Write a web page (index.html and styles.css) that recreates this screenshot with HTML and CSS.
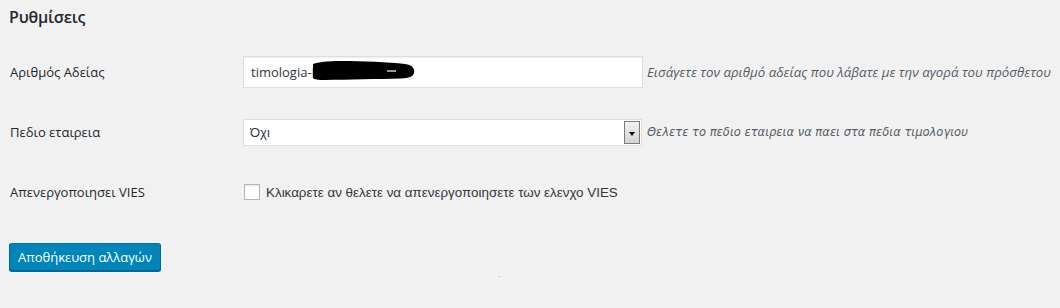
FILE: index.html
```html
<!DOCTYPE html>
<html lang="el">
<head>
    <meta charset="UTF-8">
    <meta name="viewport" content="width=device-width, initial-scale=1.0">
    <title>Ρυθμίσεις</title>
    <link rel="stylesheet" href="styles.css">
</head>
<body>
    <div id="wrap">
        <h2 class="title">Ρυθμίσεις</h2>
        <form class="settings">
            <div class="row">
                <label class="label" for="licence">Αριθμός Αδείας</label>
                <div class="field">
                    <div class="text-box">
                        <input id="licence" class="text-input" type="text" value="timologia-E">
                        <svg class="redact" width="102" height="20" viewBox="0 0 102 20">
                            <path d="M0 3 C6 1 14 0 28 0 C50 0 75 1 92 3 C100 4 102 8 101 12 C100 16 96 17 88 17.5 C65 18 35 18.5 12 19 C5 19 1 18.5 0 17 Z" fill="#000"/>
                            <path d="M74 10 L83 10" stroke="#fff" stroke-width="1.2"/>
                        </svg>
                    </div>
                    <span class="desc">Εισάγετε τον αριθμό αδείας που λάβατε με την αγορά του πρόσθετου</span>
                </div>
            </div>
            <div class="row">
                <label class="label" for="company">Πεδιο εταιρεια</label>
                <div class="field">
                    <div class="select-box">
                        <select id="company" class="select">
                            <option>Όχι</option>
                            <option>Ναι</option>
                        </select>
                        <span class="select-btn"></span>
                    </div>
                    <span class="desc desc-tahoma">Θελετε το πεδιο εταιρεια να παει στα πεδια τιμολογιου</span>
                </div>
            </div>
            <div class="row">
                <label class="label" for="vies">Απενεργοποιησει VIES</label>
                <div class="field">
                    <input id="vies" class="check" type="checkbox">
                    <label class="check-text" for="vies">Κλικαρετε αν θελετε να απενεργοποιησετε των ελενχο VIES</label>
                </div>
            </div>
            <button type="button" class="button-primary">Αποθήκευση αλλαγών</button>
        </form>
        <span class="dot"></span>
    </div>
</body>
</html>
```

FILE: styles.css
```css
*{
    margin: 0;
    padding: 0;
    box-sizing: border-box;
}
body{
    background: #f1f1f1;
    color: #23282d;
    font-family: "Open Sans", "Noto Sans", sans-serif;
    font-size: 13px;
    overflow: hidden;
}
#wrap{
    width: 1060px;
    height: 308px;
    padding: 0 9px;
    position: relative;
}
.title{
    font-size: 16px;
    font-weight: 600;
    line-height: 20px;
    letter-spacing: -0.2px;
    padding-top: 7px;
    height: 42px;
}
.row{
    display: flex;
    align-items: center;
    height: 60px;
}
.label{
    width: 234px;
    flex-shrink: 0;
    padding-left: 1px;
    font-size: 13px;
}
.field{
    display: flex;
    align-items: center;
    white-space: nowrap;
}
.text-box{
    position: relative;
}
.text-input{
    display: block;
    width: 400px;
    height: 32px;
    border: 1px solid #ddd;
    box-shadow: inset 0 1px 2px rgba(0,0,0,0.07);
    background: #fff;
    padding: 0 7px;
    font-family: "Open Sans", "Noto Sans", sans-serif;
    font-size: 13px;
    color: #32373c;
    outline: none;
}
/* redacted part of the licence */
.redact{
    position: absolute;
    left: 70px;
    top: 5px;
}
.desc{
    margin-left: 4px;
    font-style: italic;
    color: #555d66;
    font-size: 13.3px;
}
.desc-tahoma{
    margin-left: 5px;
    font-family: "DejaVu Sans", sans-serif;
    font-size: 11.5px;
}
.select-box{
    display: flex;
    width: 399px;
    height: 27px;
    background: #fff;
    border: 1px solid #ddd;
    padding: 1px;
}
.select{
    appearance: none;
    -webkit-appearance: none;
    flex: 1;
    border: none;
    background: transparent;
    padding-left: 5px;
    font-family: "Liberation Sans", sans-serif;
    font-size: 13px;
    color: #32373c;
    outline: none;
}
.select-btn{
    width: 16px;
    border: 1px solid #7a7a7a;
    background: linear-gradient(#f2f2f2, #d4d4d4);
    position: relative;
}
.select-btn::after{
    content: "";
    position: absolute;
    left: 4px;
    top: 10px;
    border-left: 3.5px solid transparent;
    border-right: 3.5px solid transparent;
    border-top: 4px solid #000;
}
.check{
    appearance: none;
    -webkit-appearance: none;
    width: 16px;
    height: 16px;
    margin-left: 1px;
    border: 1px solid #b4b9be;
    background: #fff;
    box-shadow: inset 0 1px 2px rgba(0,0,0,0.1);
}
.check-text{
    margin-left: 6px;
    font-family: "Liberation Sans", sans-serif;
    font-size: 13.4px;
    color: #32373c;
}
.button-primary{
    margin-top: 21px;
    height: 28px;
    padding: 0 8px;
    background: #0085ba;
    border: 1px solid;
    border-color: #0073aa #006799 #006799;
    border-radius: 3px;
    box-shadow: 0 1px 0 #006799;
    color: #fff;
    font-family: "Open Sans", "Noto Sans", sans-serif;
    font-size: 13px;
    cursor: pointer;
}
.dot{
    position: absolute;
    left: 499px;
    top: 276px;
    width: 1px;
    height: 1px;
    background: #aaa;
}
```
